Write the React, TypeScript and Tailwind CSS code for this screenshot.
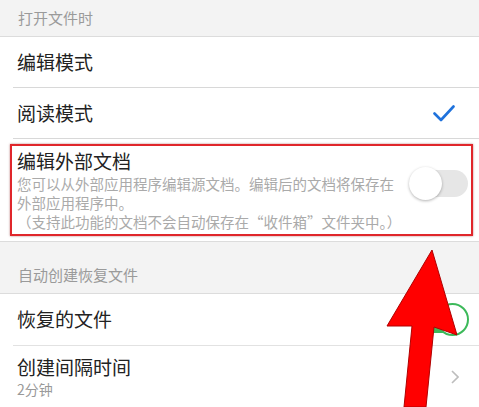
import React from 'react';

const font = { fontFamily: '"Noto Sans CJK SC", "Noto Sans", sans-serif' };

function Toggle({ on }: { on: boolean }) {
  return (
    <div className={`relative h-[27px] w-[58px] rounded-full ${on ? 'bg-[#3cb95a]' : 'bg-[#e6e6e6]'}`}>
      <div
        className={`absolute top-[-3px] h-[33px] w-[33px] rounded-full bg-white ${
          on ? 'right-[-1px] border-2 border-[#3cb95a]' : 'left-[-1px] shadow-[0_1px_3px_rgba(0,0,0,0.3)]'
        }`}
      />
    </div>
  );
}

function App() {
  return (
    <div className="relative h-[407px] w-[479px] overflow-hidden bg-white text-[#222]" style={font}>
      {/* 打开文件时 */}
      <div className="flex h-[37px] items-center border-b border-[#dcdcdc] bg-[#f3f3f3] px-[18px] text-[15px] text-[#9a9a9a]">
        打开文件时
      </div>
      <div className="ml-[13px] flex h-[51px] items-center border-b border-[#d8d8d8] pl-[4px] text-[19px]">编辑模式</div>
      <div className="ml-[13px] flex h-[51px] items-center justify-between border-b border-[#d8d8d8] pl-[4px] pr-[24px] text-[19px]">
        <span>阅读模式</span>
        <svg width="22" height="17" viewBox="0 0 22 17" fill="none">
          <path d="M1.5 8.5 L8 15 L20.5 1.5" stroke="#1f72dc" strokeWidth="2.6" strokeLinecap="round" strokeLinejoin="round" />
        </svg>
      </div>

      {/* 编辑外部文档 */}
      <div className="flex h-[103px] items-center justify-between border-b border-[#dcdcdc] pl-[17px] pr-[11px]">
        <div className="flex flex-col">
          <span className="text-[19px] leading-[24px]">编辑外部文档</span>
          <span className="mt-[1px] text-[14.5px] leading-[19px] text-[#aaa]">
            您可以从外部应用程序编辑源文档。编辑后的文档将保存在
            <br />
            外部应用程序中。
            <br />
            （支持此功能的文档不会自动保存在“收件箱”文件夹中。）
          </span>
        </div>
        <div className="mb-[14px]">
          <Toggle on={false} />
        </div>
      </div>

      {/* 自动创建恢复文件 */}
      <div className="flex h-[52px] items-end border-b border-[#dcdcdc] bg-[#f3f3f3] px-[18px] pb-[7px] text-[15px] text-[#9a9a9a]">
        自动创建恢复文件
      </div>
      <div className="ml-[13px] flex h-[52px] items-center justify-between border-b border-[#e2e2e2] pl-[4px] pr-[11px] text-[19px]">
        <span>恢复的文件</span>
        <Toggle on={true} />
      </div>
      <div className="flex h-[62px] items-center justify-between pl-[17px] pr-[20px]">
        <div className="flex flex-col">
          <span className="text-[19px] leading-[24px]">创建间隔时间</span>
          <span className="text-[14px] leading-[20px] text-[#999]">2分钟</span>
        </div>
        <svg width="8" height="14" viewBox="0 0 8 14" fill="none">
          <path d="M1 1 L7 7 L1 13" stroke="#bdbdbd" strokeWidth="1.6" />
        </svg>
      </div>

      {/* annotation: red box */}
      <div className="pointer-events-none absolute left-[10px] top-[144px] h-[92px] w-[463px] border-2 border-[#e0262b] shadow-[0_0_2px_rgba(120,0,0,0.5)]" />

      {/* annotation: arrow */}
      <svg className="pointer-events-none absolute left-0 top-0" width="479" height="407" viewBox="0 0 479 407">
        <polygon
          points="432,250 457,335 434,327 426,407 404,407 412,326 387,326"
          fill="#ff0000"
          stroke="#b00000"
          strokeWidth="1"
          strokeLinejoin="round"
        />
      </svg>
    </div>
  );
}

export default App;
